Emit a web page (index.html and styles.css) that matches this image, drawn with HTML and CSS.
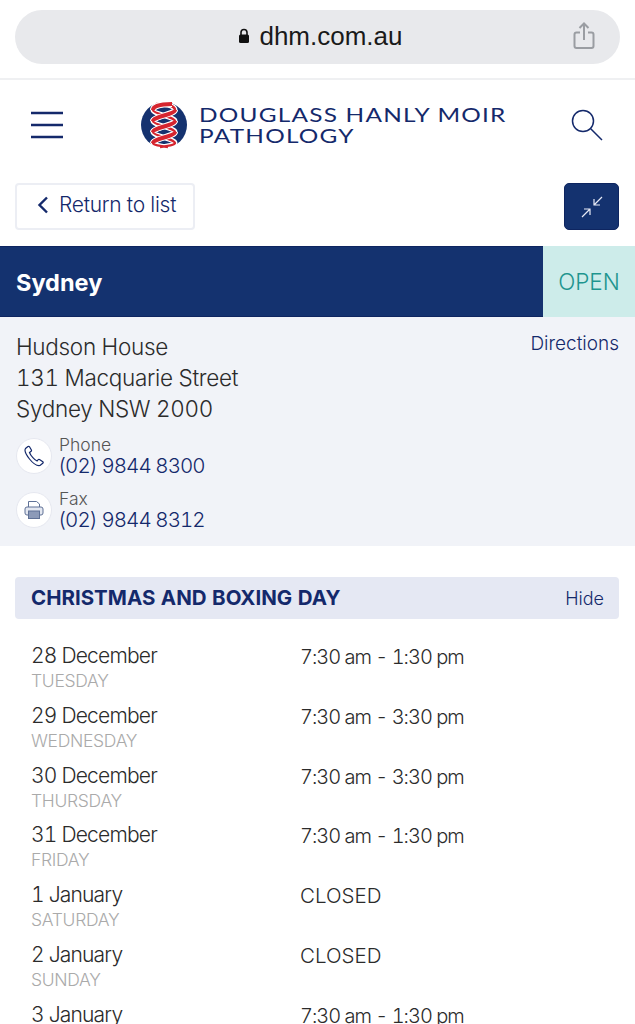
FILE: index.html
```html
<!DOCTYPE html>
<html lang="en">
<head>
  <meta charset="UTF-8">
  <meta name="viewport" content="width=device-width, initial-scale=1.0">
  <title>Sydney - Douglass Hanly Moir Pathology</title>
  <link rel="stylesheet" href="styles.css">
</head>
<body>
  <div class="browser-bar">
    <div class="address">
      <span class="url">
        <svg class="lock" width="12" height="16" viewBox="0 0 12 16"><path d="M3 7V4.500a3 3 0 0 1 6 0V7" fill="none" stroke="#111" stroke-width="1.600"/><rect x="1" y="6.500" width="10" height="8.500" rx="1.500" fill="#111"/></svg>
        dhm.com.au
      </span>
      <svg class="share" width="24" height="28" viewBox="0 0 24 28" fill="none" stroke="#9a9da2" stroke-width="2"><path d="M8 10.500H4.500a2 2 0 0 0-2 2V24a2 2 0 0 0 2 2h15a2 2 0 0 0 2-2V12.500a2 2 0 0 0-2-2H16"/><path d="M12 18V2M7.500 6 12 1.500 16.500 6"/></svg>
    </div>
  </div>

  <header class="site-header">
    <svg class="burger" width="34" height="28" viewBox="0 0 34 28"><path d="M1 2h32M1 14h32M1 26h32" stroke="#14296b" stroke-width="2.600"/></svg>
    <div class="logo">
      <svg width="48" height="48" viewBox="0 0 48 48" fill="none">
        <circle cx="24" cy="24" r="23" fill="#15326f"/>
        <path d="M16 3C30 3 35 6 35 9 35 13 13 16 13 20 13 24 35 27 35 31 35 35 13 38 13 42 13 44 20 45 28 46M32 3C18 3 13 6 13 9 13 13 35 16 35 20 35 24 13 27 13 31 13 35 35 38 35 42 35 44 28 45 20 46" stroke="#fff" stroke-width="5"/>
        <path d="M16 3C30 3 35 6 35 9 35 13 13 16 13 20 13 24 35 27 35 31 35 35 13 38 13 42 13 44 20 45 28 46M32 3C18 3 13 6 13 9 13 13 35 16 35 20 35 24 13 27 13 31 13 35 35 38 35 42 35 44 28 45 20 46" stroke="#d5252f" stroke-width="2.400"/>
        <path d="M32 3C18 3 13 6 13 9M35 9C35 13 13 16 13 20M35 20C35 24 13 27 13 31M35 31C35 35 13 38 13 42" stroke="#fff" stroke-width="6"/>
        <path d="M32 3C18 3 13 6 13 9M35 9C35 13 13 16 13 20M35 20C35 24 13 27 13 31M35 31C35 35 13 38 13 42" stroke="#d5252f" stroke-width="4"/>
      </svg>
      <div class="logo-text">DOUGLASS HANLY MOIR<br>PATHOLOGY</div>
    </div>
    <svg class="search" width="34" height="34" viewBox="0 0 34 34" fill="none" stroke="#14296b" stroke-width="1.500"><circle cx="13" cy="13" r="10.500"/><path d="M20.500 20.500 32 32"/></svg>
  </header>

  <div class="toolbar">
    <a class="back-btn">
      <svg width="12" height="18" viewBox="0 0 12 18" fill="none" stroke="#14296b" stroke-width="2.400"><path d="M10 1.500 2.500 9l7.500 7.500"/></svg>
      Return to list
    </a>
    <button class="collapse-btn">
      <svg width="24" height="24" viewBox="0 0 24 24" fill="none" stroke="#e6e9f5" stroke-width="1.200"><path d="M22 2 14 10M14 4v6h6M2 22l8-8M4 14h6v6"/></svg>
    </button>
  </div>

  <div class="title-band">
    <h1>Sydney</h1>
    <div class="status">OPEN</div>
  </div>

  <section class="info">
    <div class="address-row">
      <p class="street">Hudson House<br>131 Macquarie Street<br>Sydney NSW 2000</p>
      <a class="directions">Directions</a>
    </div>
    <div class="contact">
      <span class="round-icon">
        <svg width="22" height="22" viewBox="0 0 22 22" fill="none" stroke="#14296b" stroke-width="1.200"><path d="M5 1.500 2.500 3.500C1.500 5 2.500 9 6.500 14s8 7 10.500 6.500l3-2.500c.3-.5.2-1-.2-1.300l-3.300-2.200c-.5-.3-1-.2-1.300.2L14 16c-2-.5-6.500-5.500-7.500-8.500l1.600-1.300c.4-.3.500-.8.300-1.200L6.500 1.800C6.200 1.300 5.500 1.200 5 1.500Z"/></svg>
      </span>
      <div>
        <div class="contact-label">Phone</div>
        <a class="contact-num">(02) 9844 8300</a>
      </div>
    </div>
    <div class="contact">
      <span class="round-icon">
        <svg width="20" height="20" viewBox="0 0 20 20"><path d="M4.500 7V1.500h8l3 2.500v3" fill="#fff" stroke="#5f7196" stroke-width="1"/><rect x="1" y="7" width="18" height="8" rx="2" fill="#e3e7f0" stroke="#5f7196" stroke-width="1"/><rect x="4.500" y="11" width="11" height="7.500" fill="#8c9ab8" stroke="#5f7196" stroke-width="1"/></svg>
      </span>
      <div>
        <div class="contact-label">Fax</div>
        <a class="contact-num">(02) 9844 8312</a>
      </div>
    </div>
  </section>

  <section class="hours">
    <div class="hours-head">
      <h2>CHRISTMAS AND BOXING DAY</h2>
      <a class="hide">Hide</a>
    </div>
    <div class="hours-list">
      <div class="day"><div><div class="date">28 December</div><div class="weekday">TUESDAY</div></div><div class="time">7:30 am - 1:30 pm</div></div>
      <div class="day"><div><div class="date">29 December</div><div class="weekday">WEDNESDAY</div></div><div class="time">7:30 am - 3:30 pm</div></div>
      <div class="day"><div><div class="date">30 December</div><div class="weekday">THURSDAY</div></div><div class="time">7:30 am - 3:30 pm</div></div>
      <div class="day"><div><div class="date">31 December</div><div class="weekday">FRIDAY</div></div><div class="time">7:30 am - 1:30 pm</div></div>
      <div class="day"><div><div class="date">1 January</div><div class="weekday">SATURDAY</div></div><div class="time closed">CLOSED</div></div>
      <div class="day"><div><div class="date">2 January</div><div class="weekday">SUNDAY</div></div><div class="time closed">CLOSED</div></div>
      <div class="day"><div><div class="date">3 January</div><div class="weekday">MONDAY</div></div><div class="time">7:30 am - 1:30 pm</div></div>
    </div>
  </section>
</body>
</html>
```

FILE: styles.css
```css
html, body { height: 1024px; overflow: hidden; }
body { margin: 0; background: #fff; font-family: Inter, "Liberation Sans", sans-serif; font-weight: 300; font-variant-numeric: tabular-nums; color: #2b2b2b; }
a { color: inherit; text-decoration: none; }

.browser-bar { height: 80px; padding: 10px 15px 0; box-sizing: border-box; border-bottom: 2px solid #eff0f2; }
.address { position: relative; height: 54px; border-radius: 27px; background: #e8e9ec; display: flex; align-items: center; justify-content: center; }
.url { font-family: "Liberation Sans", sans-serif; font-weight: 400; font-size: 26px; color: #1a1a1a; display: flex; align-items: center; gap: 9px; padding: 0 0 2px 6px; }
.share { position: absolute; right: 24px; top: 12px; }

.site-header { height: 90px; padding: 0 31px 0 30px; display: flex; align-items: center; justify-content: space-between; }
.burger { flex: none; }
.logo { display: flex; align-items: center; gap: 11px; margin-left: 12px; }
.logo-text { width: 307px; font-family: Lato, sans-serif; font-weight: 400; font-size: 20px; line-height: 21px; letter-spacing: 1px; color: #14296b; white-space: nowrap; transform: scaleX(1.22); transform-origin: left center; }

.toolbar { display: flex; justify-content: space-between; padding: 13px 16px 16px 15px; }
.back-btn { height: 47px; width: 180px; box-sizing: border-box; border: 2px solid #eceef4; border-radius: 4px; display: flex; align-items: center; gap: 10px; padding: 0 0 4px 20px; font-size: 21px; letter-spacing: -0.25px; color: #14296b; }
.collapse-btn { width: 55px; height: 47px; padding: 0; background: #14326f; border: 1px solid #0e2560; border-radius: 5px; display: flex; align-items: center; justify-content: center; }

.title-band { height: 71px; display: flex; }
.title-band h1 { flex: 1; margin: 0; padding-left: 16px; background: #14326f; color: #fff; font-size: 23.500px; font-weight: 700; line-height: 72px; border-top: 1px solid #0e2560; border-bottom: 1px solid #0e2560; box-sizing: border-box; }
.status { width: 92px; background: #cdecea; color: #1e958f; font-size: 22.500px; font-weight: 300; text-align: center; line-height: 72px; }

.info { height: 229px; box-sizing: border-box; background: #f1f3f8; padding: 14px 16px 0; }
.address-row { display: flex; justify-content: space-between; align-items: flex-start; }
.street { margin: 0; font-size: 22.500px; line-height: 31px; letter-spacing: -0.3px; }
.directions { font-size: 19px; line-height: 26px; color: #14296b; font-weight: 350; }
.contact { display: flex; align-items: center; gap: 7px; height: 46px; margin-top: 8px; }
.address-row + .contact { margin-top: 9px; }
.round-icon { flex: none; width: 34px; height: 34px; border-radius: 50%; background: #fff; border: 1px solid #e6e8f0; display: flex; align-items: center; justify-content: center; }
.contact-label { font-size: 17.500px; line-height: 20px; color: #555; }
.contact-num { display: block; font-size: 20.500px; line-height: 22px; letter-spacing: -0.93px; margin-left: -1px; color: #14296b; font-weight: 300; }

.hours { padding: 31px 16px 0 15px; }
.hours-head { height: 42px; background: #e5e8f3; border-radius: 4px; display: flex; align-items: center; justify-content: space-between; padding: 0 15px 0 16px; }
.hours-head h2 { margin: 0 0 2px; font-size: 20.500px; font-weight: 700; color: #14296b; }
.hide { font-size: 18px; color: #14296b; font-weight: 350; }
.hours-list { padding: 24px 0 0 16px; }
.day { height: 59.800px; display: grid; grid-template-columns: 269px 1fr; }
.date { font-size: 21px; line-height: 26px; letter-spacing: -0.8px; }
.weekday { font-size: 17.500px; line-height: 24px; letter-spacing: -0.3px; color: #aaa; }
.time { font-size: 20px; line-height: 28px; letter-spacing: -1px; }
.time.closed { font-size: 20.500px; letter-spacing: 0; }
```
